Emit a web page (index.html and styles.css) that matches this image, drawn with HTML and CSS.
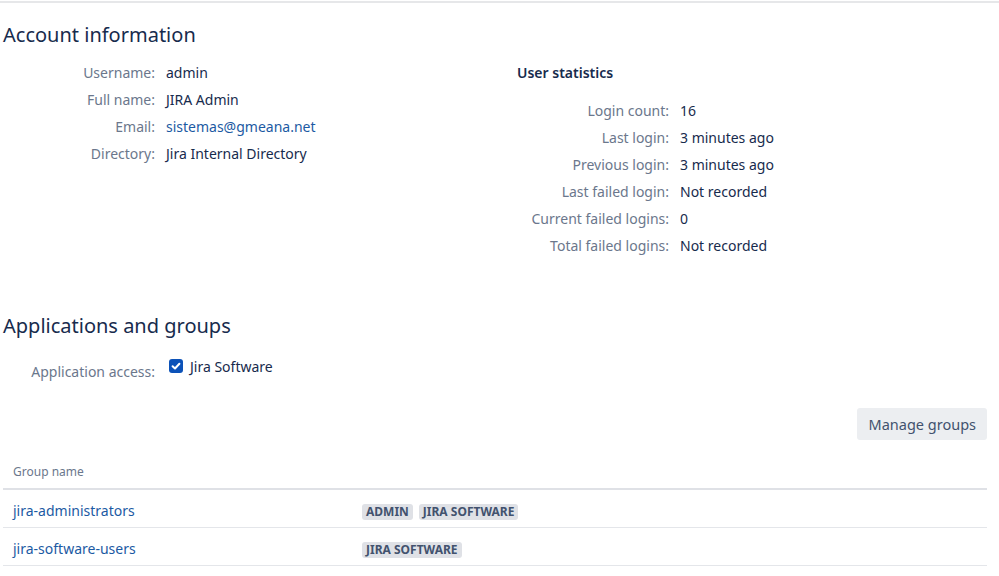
FILE: index.html
```html
<!DOCTYPE html>
<html lang="en">
<head>
<meta charset="utf-8">
<title>User details</title>
<link rel="stylesheet" href="styles.css">
</head>
<body>
<div class="topbar"></div>
<main class="page">
  <h2 class="section-title">Account information</h2>
  <div class="account-cols">
    <dl class="details">
      <dt>Username:</dt><dd>admin</dd>
      <dt>Full name:</dt><dd>JIRA Admin</dd>
      <dt>Email:</dt><dd><a class="link" href="#">sistemas@gmeana.net</a></dd>
      <dt>Directory:</dt><dd>Jira Internal Directory</dd>
    </dl>
    <div class="stats">
      <h3 class="stats-title">User statistics</h3>
      <dl class="details">
        <dt>Login count:</dt><dd>16</dd>
        <dt>Last login:</dt><dd>3 minutes ago</dd>
        <dt>Previous login:</dt><dd>3 minutes ago</dd>
        <dt>Last failed login:</dt><dd>Not recorded</dd>
        <dt>Current failed logins:</dt><dd>0</dd>
        <dt>Total failed logins:</dt><dd>Not recorded</dd>
      </dl>
    </div>
  </div>

  <h2 class="section-title apps-title">Applications and groups</h2>
  <div class="access">
    <div class="access-label">Application access:</div>
    <label class="access-value">
      <span class="checkbox"><svg viewBox="0 0 14 14" width="14" height="14"><rect x="0" y="0" width="14" height="14" rx="3" fill="#0c52b8"/><path d="M3.6 7.2 L6 9.5 L10.4 4.8" fill="none" stroke="#fff" stroke-width="2" stroke-linecap="round" stroke-linejoin="round"/></svg></span>
      <span>Jira Software</span>
    </label>
  </div>

  <div class="toolbar">
    <button class="btn" type="button">Manage groups</button>
  </div>

  <table class="groups">
    <thead>
      <tr><th class="col-name">Group name</th><th></th></tr>
    </thead>
    <tbody>
      <tr>
        <td class="col-name"><a class="link" href="#">jira-administrators</a></td>
        <td><span class="lozenge">Admin</span><span class="lozenge">Jira Software</span></td>
      </tr>
      <tr>
        <td class="col-name"><a class="link" href="#">jira-software-users</a></td>
        <td><span class="lozenge">Jira Software</span></td>
      </tr>
    </tbody>
  </table>
</main>
</body>
</html>
```
FILE: styles.css
```css
html, body {
  margin: 0;
  padding: 0;
  background: #ffffff;
}
body {
  font-family: "Noto Sans", "Open Sans", "Liberation Sans", sans-serif;
  font-size: 14px;
  color: #172b4d;
}
.topbar {
  height: 2px;
  margin-top: 1px;
  background: #e6e7e9;
}
.page {
  padding: 0 12px 0 3px;
}
.section-title {
  margin: 18px 0 0 0;
  font-size: 20px;
  font-weight: 400;
  line-height: 28px;
  color: #172b4d;
}
.account-cols {
  display: grid;
  grid-template-columns: 514px 1fr;
  align-items: start;
  margin-top: 10px;
}
.details {
  display: grid;
  grid-template-columns: 152px 1fr;
  column-gap: 11px;
  align-content: start;
  margin: 0;
  line-height: 27px;
}
.details dt {
  text-align: right;
  color: #6b778c;
}
.details dd {
  margin: 0;
  color: #172b4d;
}
.link {
  color: #1c5aa3;
  text-decoration: none;
}
.stats-title {
  margin: 0 0 11px 0;
  font-size: 14px;
  font-weight: 600;
  line-height: 27px;
  color: #172b4d;
}
.apps-title {
  margin-top: 53px;
}
.access {
  display: flex;
  margin-top: 17px;
}
.access-label {
  width: 152px;
  text-align: right;
  color: #6b778c;
  line-height: 20px;
  padding-top: 5px;
}
.access-value {
  display: flex;
  align-items: center;
  gap: 7px;
  margin-left: 14px;
  line-height: 20px;
  height: 20px;
}
.checkbox {
  display: flex;
  width: 14px;
  height: 14px;
  margin-top: -3px;
}
.toolbar {
  display: flex;
  justify-content: flex-end;
  margin-top: 26px;
}
.btn {
  height: 32px;
  padding: 0 11px 0 12px;
  border: 0;
  border-radius: 3px;
  background: #eceef1;
  color: #42526e;
  font-family: inherit;
  font-size: 14.5px;
}
.groups {
  width: 100%;
  border-collapse: collapse;
  margin-top: 10px;
}
.groups th {
  text-align: left;
  font-size: 12px;
  font-weight: 400;
  color: #6b778c;
  padding: 13px 10px 7px 10px;
  border-bottom: 2px solid #dfe1e6;
  line-height: 18px;
}
.groups td {
  padding: 3px 10px 0 10px;
  height: 34px;
  border-bottom: 1px solid #e4e6ea;
  font-size: 14px;
}
.groups .col-name {
  width: 329px;
}
.lozenge {
  display: inline-block;
  margin-right: 6px;
  padding: 0 4px;
  border-radius: 3px;
  background: #dfe1e6;
  color: #42526e;
  font-size: 12px;
  font-weight: 700;
  line-height: 16px;
  text-transform: uppercase;
  vertical-align: middle;
}
```
